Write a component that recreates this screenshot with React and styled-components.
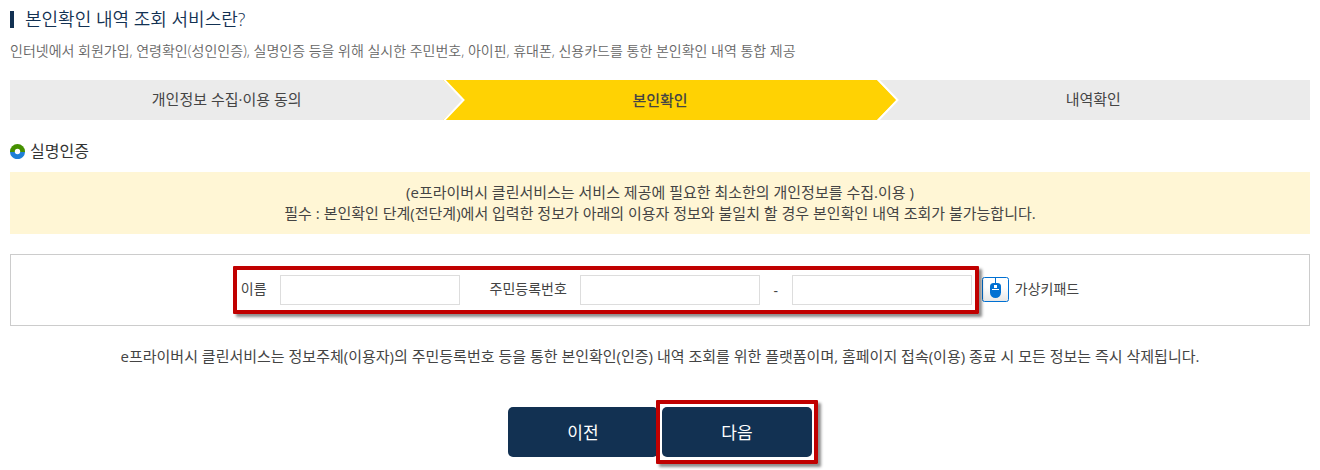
import React, { useState } from 'react'
import styled, { createGlobalStyle } from 'styled-components'

const GlobalStyle = createGlobalStyle`
  * {
    box-sizing: border-box;
  }
  body {
    margin: 0;
    background: #fff;
    color: #444;
    font-family: 'Open Sans', 'Noto Sans CJK KR', sans-serif;
    font-size: 15px;
    line-height: 21px;
  }
  h1, h2, p, ol {
    margin: 0;
    padding: 0;
    font-weight: 400;
  }
  input, button {
    font-family: inherit;
  }
`

const Page = styled.main`
  padding: 10px 10px 13px;
`

const Title = styled.h1`
  display: flex;
  align-items: center;
  height: 18px;
  color: #123152;
  font-size: 18px;
  font-weight: 350;
  line-height: 18px;
  &:before {
    content: '';
    width: 4px;
    height: 17px;
    margin-right: 11px;
    background: #123152;
  }
`

const Description = styled.p`
  margin-top: 12px;
  color: #666;
  font-size: 14px;
  font-weight: 350;
`

const Steps = styled.ol`
  display: flex;
  margin-top: 19px;
  list-style: none;
`

const Step = styled.li`
  position: relative;
  flex: 1;
  height: 40px;
  line-height: ${({ $active }) => ($active ? '40px' : '38px')};
  text-align: center;
  font-weight: ${({ $active }) => ($active ? 500 : 400)};
  background: ${({ $active }) => ($active ? '#ffd203' : '#ebebeb')};
`

const StepArrow = styled.svg`
  position: absolute;
  top: 0;
  left: 100%;
  z-index: 1;
  color: ${({ $active }) => ($active ? '#ffd203' : '#ebebeb')};
`

const SectionTitle = styled.h2`
  display: flex;
  align-items: center;
  gap: 5px;
  height: 22px;
  margin-top: 20px;
  color: #333;
  font-size: 16px;
  line-height: 22px;
`

const Notice = styled.p`
  margin-top: 10px;
  padding: 10px;
  text-align: center;
  background: #fff6d5;
`

const FormBox = styled.form`
  display: flex;
  align-items: center;
  justify-content: center;
  gap: 10px;
  margin-top: 20px;
  padding: 20px;
  border: 1px solid #ccc;
  font-size: 14px;
`

const Highlight = styled.div`
  position: relative;
  display: flex;
  align-items: center;
  &:after {
    content: '';
    position: absolute;
    inset: ${({ $inset }) => $inset};
    border: 4px solid #c00000;
    border-radius: 1px;
    box-shadow: 3px 3px 3px rgba(0, 0, 0, 0.45);
    pointer-events: none;
  }
`

const Fields = styled(Highlight)`
  gap: 30px;
`

const Field = styled.div`
  display: flex;
  align-items: center;
  gap: 13px;
`

const Label = styled.label`
  padding-bottom: 3px;
`

const Input = styled.input`
  width: 180px;
  height: 30px;
  padding: 0 8px;
  border: 1px solid #ddd;
  border-radius: 0;
  background: #fff;
  font-size: 14px;
`

const Dash = styled.span`
  width: 6px;
  text-align: center;
`

const Keypad = styled.button`
  display: flex;
  align-items: center;
  gap: 6px;
  padding: 0 0 1px;
  border: 0;
  background: none;
  color: #444;
  font-size: 14px;
  line-height: 21px;
  cursor: pointer;
  span {
    padding-bottom: 3px;
  }
`

const Guide = styled.p`
  margin-top: 20px;
  text-align: center;
`

const Actions = styled.div`
  display: flex;
  justify-content: center;
  gap: 4px;
  margin-top: 40px;
`

const Button = styled.button`
  width: 150px;
  height: 50px;
  padding: 0 0 2px;
  border: 0;
  border-radius: 5px;
  background: #123152;
  color: #fff;
  font-size: 17px;
  cursor: pointer;
`

const Arrow = ({ active }) => (
  <StepArrow $active={active} width="24" height="40" viewBox="0 0 24 40" aria-hidden="true">
    <path d="M0 0L20 20L0 40Z" fill="currentColor" />
    <path d="M0.5 -1L20.5 20L0.5 41" fill="none" stroke="#fff" strokeWidth="2" />
  </StepArrow>
)

const RingIcon = () => (
  <svg width="15" height="15" viewBox="0 0 15 15" aria-hidden="true">
    <path d="M0 7.5A7.5 7.5 0 0 1 15 7.5V8H0Z" fill="#459000" />
    <path d="M0 8A7.5 7.2 0 0 0 15 8Z" fill="#1f7fd6" />
    <circle cx="7.5" cy="7.5" r="2.7" fill="#fff" />
  </svg>
)

const MouseIcon = () => (
  <svg width="27" height="25" viewBox="0 0 27 25" aria-hidden="true">
    <defs>
      <linearGradient id="keypad-bg" x1="0" y1="0" x2="0" y2="1">
        <stop offset="0.4" stopColor="#fff" />
        <stop offset="1" stopColor="#e6e6e6" />
      </linearGradient>
    </defs>
    <rect x="0.5" y="0.5" width="26" height="24" rx="2" fill="url(#keypad-bg)" stroke="#0070d2" />
    <path d="M13.5 0V6" stroke="#0070d2" />
    <path d="M8 9.5Q8 6 11.5 6H15.5Q19 6 19 9.5V15.5A5.5 5.5 0 0 1 8 15.5Z" fill="#0070d2" />
    <path d="M12 8H15V11H12ZM10 12H17V13H10Z" fill="#fff" />
  </svg>
)

const steps = ['개인정보 수집·이용 동의', '본인확인', '내역확인']

export default function App() {
  const [form, setForm] = useState({ name: '', front: '', back: '' })
  const bind = (key) => ({
    value: form[key],
    onChange: (e) => setForm({ ...form, [key]: e.target.value }),
  })

  return (
    <>
      <GlobalStyle />
      <Page lang="ko">
        <Title>본인확인 내역 조회 서비스란?</Title>
        <Description>
          인터넷에서 회원가입, 연령확인(성인인증), 실명인증 등을 위해 실시한 주민번호, 아이핀, 휴대폰, 신용카드를 통한 본인확인 내역 통합 제공
        </Description>
        <Steps>
          {steps.map((step, i) => (
            <Step key={step} $active={i === 1} aria-current={i === 1 ? 'step' : undefined}>
              {step}
              {i < steps.length - 1 && <Arrow active={i === 1} />}
            </Step>
          ))}
        </Steps>
        <SectionTitle>
          <RingIcon />
          실명인증
        </SectionTitle>
        <Notice>
          (e프라이버시 클린서비스는 서비스 제공에 필요한 최소한의 개인정보를 수집.이용 )
          <br />
          필수 : 본인확인 단계(전단계)에서 입력한 정보가 아래의 이용자 정보와 불일치 할 경우 본인확인 내역 조회가 불가능합니다.
        </Notice>
        <FormBox id="identity" onSubmit={(e) => e.preventDefault()}>
          <Fields $inset="-9px -7px -9px -8px">
            <Field>
              <Label htmlFor="name">이름</Label>
              <Input id="name" type="text" {...bind('name')} />
            </Field>
            <Field>
              <Label htmlFor="front">주민등록번호</Label>
              <Input id="front" type="text" maxLength={6} {...bind('front')} />
              <Dash>-</Dash>
              <Input type="password" maxLength={7} aria-label="주민등록번호 뒷자리" {...bind('back')} />
            </Field>
          </Fields>
          <Keypad type="button">
            <MouseIcon />
            <span>가상키패드</span>
          </Keypad>
        </FormBox>
        <Guide>
          e프라이버시 클린서비스는 정보주체(이용자)의 주민등록번호 등을 통한 본인확인(인증) 내역 조회를 위한 플랫폼이며, 홈페이지 접속(이용) 종료 시 모든 정보는 즉시 삭제됩니다.
        </Guide>
        <Actions>
          <Button type="button">이전</Button>
          <Highlight $inset="-7px -6px">
            <Button type="submit" form="identity">다음</Button>
          </Highlight>
        </Actions>
      </Page>
    </>
  )
}
